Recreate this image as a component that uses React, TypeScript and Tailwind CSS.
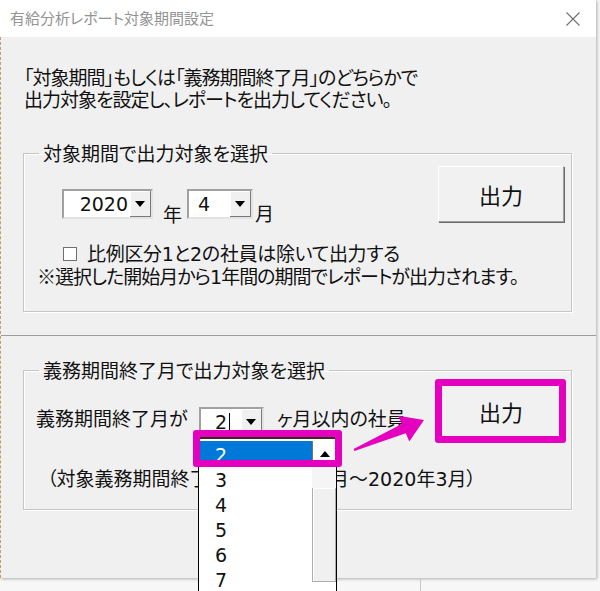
import React from "react";

const Num = ({ children }: { children: React.ReactNode }) => (
  <span className="font-['DejaVu_Sans',sans-serif]">{children}</span>
);

const Down = () => (
  <svg width="10" height="6" viewBox="0 0 10 6">
    <path d="M0 0h10L5 6z" fill="#000" />
  </svg>
);

const Up = () => (
  <svg width="10" height="6" viewBox="0 0 10 6">
    <path d="M0 6h10L5 0z" fill="#000" />
  </svg>
);

function Combo({
  value,
  width,
  pad,
  caret,
}: {
  value: string;
  width: string;
  pad: string;
  caret?: boolean;
}) {
  return (
    <div
      className={`${width} h-[30px] shrink-0 flex bg-white border-2 border-t-[#a0a0a0] border-l-[#a0a0a0] border-b-[#e3e3e3] border-r-[#e3e3e3]`}
    >
      <div className={`flex-1 flex items-center ${pad} text-[19px] leading-none`}>
        <Num>{value}</Num>
        {caret && <span className="ml-[2px] w-[1px] h-[18px] bg-black" />}
      </div>
      <div className="w-[21px] flex items-center justify-center bg-[#f0f0f0] border-r border-b border-[#7a7a7a] shadow-[inset_1px_1px_0_#fff]">
        <Down />
      </div>
    </div>
  );
}

function OutButton() {
  return (
    <button className="w-[126px] h-[56px] shrink-0 bg-[#f1f1f1] border border-t-white border-l-white border-r-[#a0a0a0] border-b-[#a0a0a0] shadow-[1px_1px_0_#6b6b6b] text-[22px] text-[#111]">
      出力
    </button>
  );
}

export default function App() {
  return (
    <div className="relative w-[600px] h-[591px] overflow-hidden bg-[#f7f7f7] text-[#111] font-['Noto_Sans_CJK_JP',sans-serif] [font-feature-settings:'palt']">
      <div className="w-[596px] h-[578px] flex flex-col shadow-[1px_1px_3px_rgba(0,0,0,0.3)]">
        {/* title bar */}
        <div className="h-[37px] shrink-0 bg-white flex items-center justify-between pl-[10px] pr-[16px]">
          <span className="text-[15px] text-[#939393]">有給分析レポート対象期間設定</span>
          <svg width="14" height="14" viewBox="0 0 14 14">
            <path d="M0.5 0.5L13.5 13.5M13.5 0.5L0.5 13.5" stroke="#6f6f6f" strokeWidth="1.1" />
          </svg>
        </div>

        <div className="flex-1 bg-[#f0f0f0] border-l border-dashed border-[#c99a6b]">
          {/* period section */}
          <section className="h-[299px] border-b border-[#9c9c9c] px-[22px] pt-[29px]">
            <p className="ml-[1px] text-[19px] leading-[22px] tracking-[-1px] whitespace-nowrap">
              「対象期間」もしくは「義務期間終了月」のどちらかで
              <br />
              出力対象を設定し、レポートを出力してください。
            </p>

            <fieldset className="mt-[32px] w-[549px] min-w-0 border border-[#c6c6c6] shadow-[inset_1px_1px_0_#fff,1px_1px_0_#fff] pb-[23px]">
              <legend className="ml-[15px] px-[4px] text-[19px] leading-[22px]">
                対象期間で出力対象を選択
              </legend>
              <div className="flex justify-between">
                <div className="flex-1 min-w-0 pl-[13px] pt-[25px] text-[19px] leading-[22px]">
                  <div className="flex items-end pl-[25px]">
                    <Combo value="2020" width="w-[91px]" pad="justify-end pr-[2px]" />
                    <span className="ml-[10px] -mb-[6px]">年</span>
                    <div className="ml-[5px]">
                      <Combo value="4" width="w-[66px]" pad="pl-[9px]" />
                    </div>
                    <span className="ml-[2px] -mb-[5px]">月</span>
                  </div>
                  <div className="mt-[23px] flex items-center pl-[26px] whitespace-nowrap">
                    <span className="w-[14px] h-[14px] bg-white border border-[#707070]" />
                    <span className="ml-[10px] tracking-[-0.3px]">
                      比例区分<Num>1</Num>と<Num>2</Num>の社員は除いて出力する
                    </span>
                  </div>
                  <div className="whitespace-nowrap tracking-[-1px]">
                    ※選択した開始月から<Num>1</Num>年間の期間でレポートが出力されます。
                  </div>
                </div>
                <div className="mt-[2px] mr-[7px] shrink-0">
                  <OutButton />
                </div>
              </div>
            </fieldset>
          </section>

          {/* deadline section */}
          <section className="h-[242px] px-[22px] pt-[23px]">
            <fieldset className="w-[549px] min-w-0 border border-[#c6c6c6] shadow-[inset_1px_1px_0_#fff,1px_1px_0_#fff] pb-[19px]">
              <legend className="ml-[15px] px-[4px] text-[19px] leading-[22px]">
                義務期間終了月で出力対象を選択
              </legend>
              <div className="flex justify-between">
                <div className="flex-1 min-w-0 pl-[12px] pt-[26px] text-[19px] leading-[22px]">
                  <div className="flex items-start whitespace-nowrap">
                    <span className="w-[163px] shrink-0">義務期間終了月が</span>
                    <Combo value="2" width="w-[65px]" pad="pl-[14px]" caret />
                    <span className="ml-[13px]">ヶ月以内の社員</span>
                  </div>
                  <div className="mt-[30px] ml-[11px] whitespace-nowrap">
                    （対象義務期間終<span className="tracking-[1.5px]">了月：<Num>2020</Num>年<Num>2</Num></span>月～<Num>2020</Num>年<Num>3</Num>月）
                  </div>
                </div>
                <div className="mt-[2px] mr-[7px] shrink-0">
                  <OutButton />
                </div>
              </div>
            </fieldset>
          </section>
        </div>
      </div>

      {/* strip under the dialog */}
      <div className="flex h-[13px]">
        <div className="w-[420px]" />
        <div className="w-[1px] bg-[#c8c8c8]" />
      </div>

      {/* open dropdown list */}
      <div className="absolute left-[198px] top-[437px] w-[139px] h-[160px] flex bg-white border border-black border-t-2 border-t-[#3a2a1a]">
        <div className="flex-1 pt-[2px] text-[19px] leading-[25px]">
          {["2", "3", "4", "5", "6", "7"].map((n, i) => (
            <div
              key={n}
              className={
                i === 0
                  ? "h-[25px] ml-[1px] pl-[15px] bg-[#0078d7] text-white"
                  : "h-[25px] pl-[16px] text-[#111]"
              }
            >
              <Num>{n}</Num>
            </div>
          ))}
        </div>
        <div className="w-[24px] pt-[2px] flex flex-col">
          <div className="h-[25px] flex items-center justify-center bg-white border-l border-[#8b6e55]">
            <Up />
          </div>
          <div className="h-[22px] bg-[#f5f5f5]" />
          <div className="h-[94px] bg-[#f0f0f0] border-l border-r border-b border-[#adadad] shadow-[inset_1px_1px_0_#fff]" />
        </div>
      </div>

      {/* annotations */}
      <div className="absolute left-[193px] top-[430px] w-[149px] h-[37px] border-[7px] border-[#e400be] rounded-[3px]" />
      <div className="absolute left-[435px] top-[379px] w-[131px] h-[64px] border-[7px] border-[#e400be] rounded-[3px]" />
      <svg className="absolute left-0 top-0 pointer-events-none" width="600" height="591">
        <polygon
          points="353.6,449.1 401.8,424.1 398.3,415.8 424,420 409.3,441.6 405.8,433.3 354.4,450.9"
          fill="#e400be"
        />
      </svg>
    </div>
  );
}
